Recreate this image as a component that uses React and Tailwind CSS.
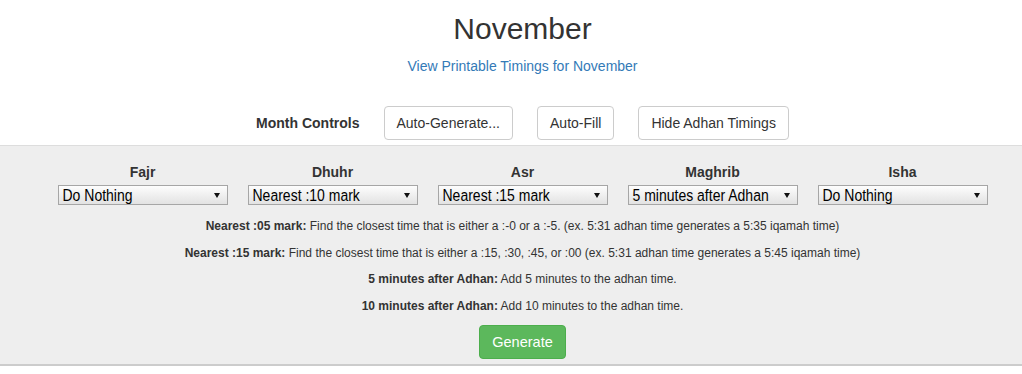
import { useState } from 'react';

const PRAYERS = [
  { name: 'Fajr', value: 'Do Nothing' },
  { name: 'Dhuhr', value: 'Nearest :10 mark' },
  { name: 'Asr', value: 'Nearest :15 mark' },
  { name: 'Maghrib', value: '5 minutes after Adhan' },
  { name: 'Isha', value: 'Do Nothing' },
];

const NOTES = [
  { label: 'Nearest :05 mark:', text: 'Find the closest time that is either a :-0 or a :-5. (ex. 5:31 adhan time generates a 5:35 iqamah time)' },
  { label: 'Nearest :15 mark:', text: 'Find the closest time that is either a :15, :30, :45, or :00 (ex. 5:31 adhan time generates a 5:45 iqamah time)' },
  { label: '5 minutes after Adhan:', text: 'Add 5 minutes to the adhan time.' },
  { label: '10 minutes after Adhan:', text: 'Add 10 minutes to the adhan time.' },
];

function FakeSelect({ value }) {
  return (
    <div className="flex h-[20px] w-[170px] items-center justify-between border border-[#a6a6a6] bg-gradient-to-b from-[#fdfdfd] to-[#e2e2e2] pl-[4px] pr-[7px] text-[14px] leading-none text-black">
      <span className="inline-block scale-y-[1.12]">{value}</span>
      <svg width="6" height="5" viewBox="0 0 6 5" className="mt-[1px]">
        <path d="M0 0h6L3 5z" fill="#111" />
      </svg>
    </div>
  );
}

function Btn({ children, onClick }) {
  return (
    <button
      type="button"
      onClick={onClick}
      className="h-[34px] rounded-[4px] border border-[#ccc] bg-white px-[12px] text-[14px] text-[#333]"
    >
      {children}
    </button>
  );
}

export default function App() {
  const [hidden, setHidden] = useState(false);

  return (
    <div className="min-h-[374px] w-full bg-white font-['Liberation_Sans',Arial,sans-serif] text-[14px] leading-[20px] text-[#333]">
      <div className="pl-[23px]">
        <h1 className="pt-[12px] text-center text-[30px] leading-[33px] font-normal">November</h1>
        <div className="mt-[11px] text-center">
          <a href="#" className="text-[#337ab7]">View Printable Timings for November</a>
        </div>

        <div className="mt-[30px] flex items-center justify-center gap-[24px]">
          <span className="font-bold">Month Controls</span>
          <Btn>Auto-Generate...</Btn>
          <Btn>Auto-Fill</Btn>
          <Btn onClick={() => setHidden(!hidden)}>
            {hidden ? 'Show Adhan Timings' : 'Hide Adhan Timings'}
          </Btn>
        </div>
      </div>

      <div className="mt-[5px] border-t border-b-2 border-t-[#ddd] border-b-[#ccc] bg-[#eee] pt-[16px] pb-[5px]">
        <div className="pl-[23px]">
          <div className="flex justify-center">
            {PRAYERS.map((p) => (
              <div key={p.name} className="flex w-[190px] flex-col items-center">
                <div className="font-bold">{p.name}</div>
                <div className="mt-[3px]">
                  <FakeSelect value={p.value} />
                </div>
              </div>
            ))}
          </div>

          <div className="mt-[13px] flex flex-col items-center gap-[9.5px] text-[12px] leading-[17px]">
            {NOTES.map((n) => (
              <p key={n.label}>
                <b>{n.label}</b> {n.text}
              </p>
            ))}
          </div>

          <div className="mt-[10px] flex justify-center">
            <button
              type="button"
              className="h-[34px] rounded-[4px] border border-[#4cae4c] bg-[#5cb85c] px-[12px] text-[14.5px] text-white"
            >
              Generate
            </button>
          </div>
        </div>
      </div>
    </div>
  );
}
